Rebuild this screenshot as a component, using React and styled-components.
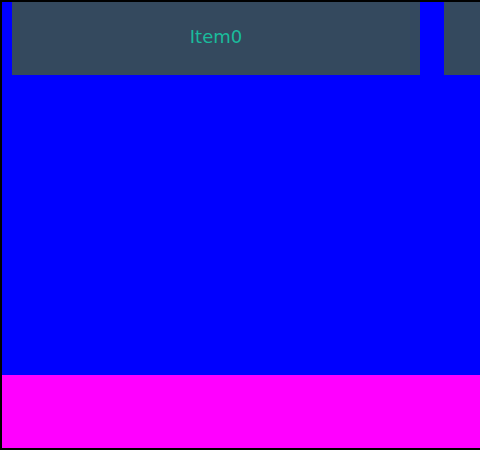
import React from "react";
import styled, { createGlobalStyle } from "styled-components";

const GlobalStyle = createGlobalStyle`
  html, body {
    margin: 0;
    padding: 0;
    overflow: hidden;
    background: #ffffff;
  }
`;

const Frame = styled.div`
  box-sizing: border-box;
  width: calc(100vw + 2px);
  height: 450px;
  border: 2px solid #000;
  background: #0000ff;
  display: flex;
  flex-direction: column;
  font-family: "DejaVu Sans", sans-serif;
`;

const Carousel = styled.div`
  display: flex;
  gap: 24px;
  padding-left: 10px;
  overflow: hidden;
  flex-shrink: 0;
`;

const Card = styled.div`
  box-sizing: border-box;
  flex: 0 0 408px;
  height: 73px;
  padding-bottom: 4px;
  background: #34495e;
  color: #1abc9c;
  font-size: 18px;
  display: flex;
  align-items: center;
  justify-content: center;
`;

const Body = styled.div`
  flex: 1;
`;

const Footer = styled.div`
  height: 73px;
  background: #ff00ff;
  flex-shrink: 0;
`;

const items = ["Item0", "Item1", "Item2"];

const App = () => {
  return (
    <>
      <GlobalStyle />
      <Frame>
        <Carousel>
          {items.map((item) => (
            <Card key={item}>{item}</Card>
          ))}
        </Carousel>
        <Body />
        <Footer />
      </Frame>
    </>
  );
};

export default App;
